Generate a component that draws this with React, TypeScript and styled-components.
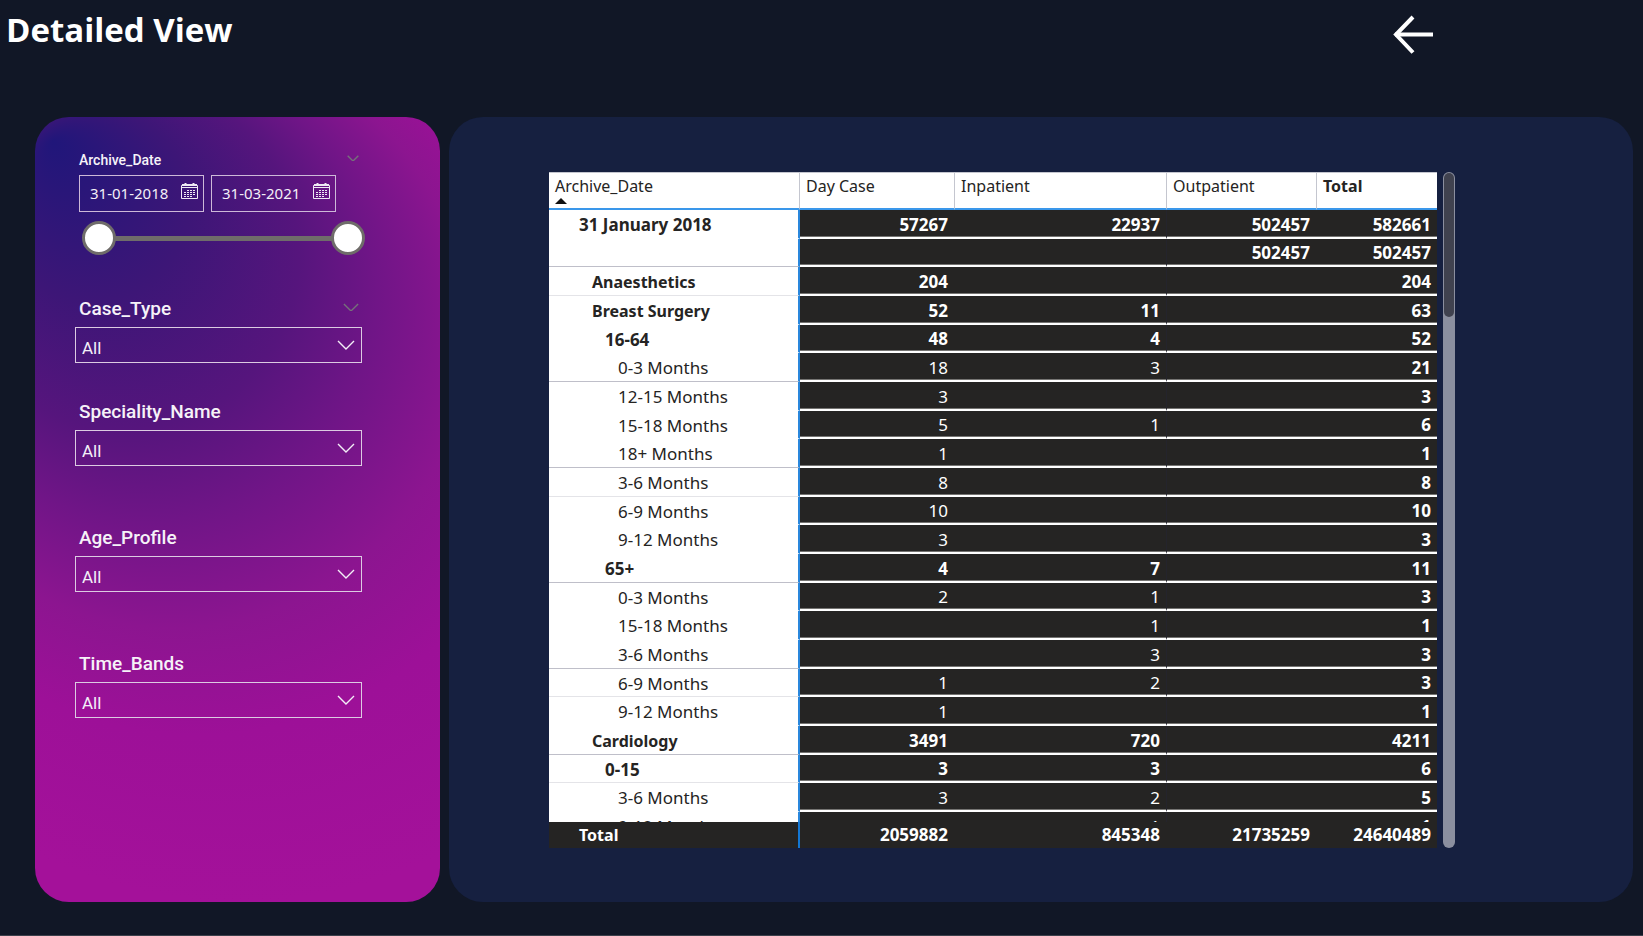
import React, { useState } from "react";
import styled, { createGlobalStyle } from "styled-components";

const GlobalStyle = createGlobalStyle`
  *, *::before, *::after { box-sizing: border-box; }
  body { margin: 0; background: #111726; }
`;

const textFont = `"Noto Sans", "Open Sans", sans-serif`;
const labelFont = `Roboto, "Liberation Sans", sans-serif`;

const Page = styled.div`
  display: flex;
  flex-direction: column;
  height: 100vh;
  min-height: 640px;
  padding: 0 10px 33px 35px;
  border-bottom: 1px solid #3c404b;
  background: #111726;
  font-family: ${textFont};
`;

const Header = styled.header`
  display: flex;
  flex: none;
  justify-content: space-between;
  height: 117px;
  margin-left: -29px;
  padding: 6px 197px 0 0;
`;

const Title = styled.h1`
  margin: 0;
  color: #fff;
  font: 700 33px/48px "Open Sans", "Noto Sans", sans-serif;
`;

const BackButton = styled.button`
  width: 44px;
  height: 44px;
  margin-top: 7px;
  padding: 0;
  border: 0;
  background: none;
  cursor: pointer;
  svg { display: block; }
`;

const Main = styled.main`
  display: flex;
  flex: 1;
  gap: 9px;
  min-height: 0;
`;

const FilterPanel = styled.aside`
  position: relative;
  z-index: 0;
  flex: none;
  width: 405px;
  padding: 34px 78px 0 40px;
  border-radius: 34px;
  overflow: hidden;
`;

const PanelGlow = styled.svg`
  position: absolute;
  inset: 0;
  z-index: -1;
  width: 100%;
  height: 100%;
`;

const Filter = styled.section<{ $space: number }>`
  display: flex;
  flex-direction: column;
  margin-bottom: ${(p) => p.$space}px;
`;

const FilterHead = styled.div`
  display: flex;
  align-items: center;
  justify-content: space-between;
  padding: 0 3px 0 4px;
  svg { margin-bottom: 4px; }
`;

const FilterLabel = styled.label<{ $small?: boolean }>`
  color: #f6f2f8;
  font: 500 ${(p) => (p.$small ? "14px/18px" : "19px/28px")} ${labelFont};
`;

const DateRow = styled.div`
  display: flex;
  gap: 7px;
  margin: 6px 26px 9px 4px;
`;

const DateBox = styled.div`
  display: flex;
  flex: 1;
  align-items: center;
  min-width: 0;
  height: 37px;
  padding: 0 5px 0 10px;
  border: 1px solid #cdb9d8;
  svg { flex: none; margin-bottom: 6px; }
`;

const DateInput = styled.input`
  flex: 1;
  min-width: 0;
  padding: 0 0 2px;
  border: 0;
  outline: 0;
  background: none;
  color: #f3eff7;
  font: 400 15px/20px ${textFont};
`;

const RangeTrack = styled.div`
  display: grid;
  align-items: center;
  height: 34px;
  margin: 0 -3px 0 7px;
  background: linear-gradient(#6f6c6a, #6f6c6a) center / calc(100% - 30px) 5px no-repeat;
`;

const RangeInput = styled.input`
  grid-area: 1 / 1;
  width: 100%;
  height: 34px;
  margin: 0;
  appearance: none;
  background: none;
  pointer-events: none;
  &::-webkit-slider-thumb {
    appearance: none;
    width: 34px;
    height: 34px;
    border: 3px solid #6f6c6a;
    border-radius: 50%;
    background: #fff;
    pointer-events: auto;
  }
`;

const SelectBox = styled.div`
  display: grid;
  align-items: center;
  height: 36px;
  margin-top: 4px;
  border: 1px solid #dccbe2;
  svg { grid-area: 1 / 1; justify-self: end; margin-right: 6px; pointer-events: none; }
`;

const Select = styled.select`
  grid-area: 1 / 1;
  width: 100%;
  height: 34px;
  padding: 5px 6px 0;
  border: 0;
  appearance: none;
  background: none;
  color: #f3eff7;
  font: 400 17px/24px ${labelFont};
  option { color: #252423; }
`;

const DataPanel = styled.section`
  display: flex;
  flex: 1;
  gap: 6px;
  min-width: 0;
  padding: 55px 0 54px 100px;
  border-radius: 34px;
  background: #162040;
`;

const TableView = styled.div`
  width: calc(75% + 75px);
  overflow: hidden;
  background: #252423;
`;

const Table = styled.table`
  width: 100%;
  border-spacing: 0;
  table-layout: fixed;
  color: #252423;
  font: 400 17px/22px ${textFont};
`;

const Col = styled.col<{ $width?: number }>`
  width: ${(p) => (p.$width ? `${p.$width}px` : "auto")};
`;

const HeadCell = styled.th<{ $strong?: boolean }>`
  position: sticky;
  top: 0;
  height: 38px;
  padding: 2px 6px 0;
  border-top: 1px solid #c4c6cf;
  border-right: 1px solid #c4c6cf;
  border-bottom: 2px solid #3a97ea;
  background: #fff;
  font-size: 16px;
  font-weight: ${(p) => (p.$strong ? 700 : 400)};
  text-align: left;
  vertical-align: top;
  &:last-child { border-right: 0; }
  svg { display: block; margin-top: 1px; }
`;

const Row = styled.tr`
  height: 29px;
  &:nth-child(3n + 2) { height: 28px; }
`;

const ruleColors = { none: "#fff", soft: "#e4e4e8", strong: "#bfbfc9" };

const RowHead = styled.th<{ $level: number; $strong: boolean; $rule: keyof typeof ruleColors }>`
  padding: 2px 0 0 ${(p) => 30 + p.$level * 13}px;
  border-right: 2px solid #2a87dc;
  border-bottom: 1px solid ${(p) => ruleColors[p.$rule]};
  background: #fff;
  font-size: ${(p) => (p.$level === 1 ? 16 : 17)}px;
  font-weight: ${(p) => (p.$strong ? 700 : 400)};
  text-align: left;
  white-space: nowrap;
`;

const Cell = styled.td<{ $strong: boolean }>`
  padding: 2px 7px 0 0;
  border-bottom: 2px solid #fff;
  background: #252423;
  box-shadow: inset 0 -1px #757472;
  color: #fff;
  font-weight: ${(p) => (p.$strong ? 700 : 400)};
  text-align: right;
  &:nth-child(3) { padding-right: 6px; border-right: 1px solid #24242c; }
  &:last-child { padding-right: 6px; }
`;

const FootHead = styled.th`
  position: sticky;
  bottom: 0;
  height: 26px;
  padding: 0 0 1px 30px;
  border-right: 2px solid #1377d4;
  background: #252423;
  color: #fff;
  font-size: 16px;
  text-align: left;
`;

const FootCell = styled.td`
  position: sticky;
  bottom: 0;
  height: 26px;
  padding: 0 7px 1px 0;
  background: #252423;
  color: #fff;
  font-weight: 700;
  text-align: right;
  &:last-child { padding-right: 6px; }
`;

const ScrollTrack = styled.div`
  width: 12px;
  padding: 1px;
  border-radius: 6px;
  background: #8b8f9f;
`;

const ScrollThumb = styled.div`
  height: 144px;
  border-radius: 5px;
  background: #40424f;
`;

const Chevron = ({ width, color }: { width: number; color: string }) => (
  <svg width={width} height={(width / 18) * 10} viewBox="0 0 18 10" fill="none" stroke={color} strokeWidth={(18 / width) * 1.4}>
    <path d="M1 1l8 8 8-8" />
  </svg>
);

const CalendarIcon = () => (
  <svg width="17" height="16" viewBox="0 0 17 16" fill="none" stroke="#efeaf4">
    <path d="M.5 2.5h16v13H.5z M.5 4.500h16 M1 1.500h15" />
    <path d="M4.500 0v3 M12.500 0v3" strokeWidth="2" />
    <path d="M6 7.500h9 M3 9.500h12 M3 11.500h12 M3 13.500h9" strokeDasharray="2 1" />
  </svg>
);

type Rule = keyof typeof ruleColors;
type RowData = { name: string; level: number; values: [string, string, string, string]; rule?: Rule };

const rows: RowData[] = [
  { name: "31 January 2018", level: 0, values: ["57267", "22937", "502457", "582661"] },
  { name: "", level: 1, values: ["", "", "502457", "502457"], rule: "strong" },
  { name: "Anaesthetics", level: 1, values: ["204", "", "", "204"], rule: "soft" },
  { name: "Breast Surgery", level: 1, values: ["52", "11", "", "63"] },
  { name: "16-64", level: 2, values: ["48", "4", "", "52"] },
  { name: "0-3 Months", level: 3, values: ["18", "3", "", "21"], rule: "strong" },
  { name: "12-15 Months", level: 3, values: ["3", "", "", "3"] },
  { name: "15-18 Months", level: 3, values: ["5", "1", "", "6"] },
  { name: "18+ Months", level: 3, values: ["1", "", "", "1"], rule: "strong" },
  { name: "3-6 Months", level: 3, values: ["8", "", "", "8"], rule: "soft" },
  { name: "6-9 Months", level: 3, values: ["10", "", "", "10"] },
  { name: "9-12 Months", level: 3, values: ["3", "", "", "3"] },
  { name: "65+", level: 2, values: ["4", "7", "", "11"], rule: "strong" },
  { name: "0-3 Months", level: 3, values: ["2", "1", "", "3"] },
  { name: "15-18 Months", level: 3, values: ["", "1", "", "1"] },
  { name: "3-6 Months", level: 3, values: ["", "3", "", "3"], rule: "strong" },
  { name: "6-9 Months", level: 3, values: ["1", "2", "", "3"], rule: "soft" },
  { name: "9-12 Months", level: 3, values: ["1", "", "", "1"] },
  { name: "Cardiology", level: 1, values: ["3491", "720", "", "4211"], rule: "strong" },
  { name: "0-15", level: 2, values: ["3", "3", "", "6"], rule: "soft" },
  { name: "3-6 Months", level: 3, values: ["3", "2", "", "5"] },
  { name: "9-12 Months", level: 3, values: ["", "1", "", "1"] },
];

const selects = [
  { label: "Case_Type", space: 35, collapsible: true },
  { label: "Speciality_Name", space: 58, collapsible: false },
  { label: "Age_Profile", space: 58, collapsible: false },
  { label: "Time_Bands", space: 0, collapsible: false },
];

export default function App() {
  const [from, setFrom] = useState("31-01-2018");
  const [to, setTo] = useState("31-03-2021");

  return (
    <Page>
      <GlobalStyle />
      <Header>
        <Title>Detailed View</Title>
        <BackButton aria-label="Back">
          <svg width="44" height="44" viewBox="0 0 44 44" fill="none" stroke="#fff" strokeWidth="4">
            <path d="M3 21.500h38" />
            <path d="M21 4L4 21.500l17 18" />
          </svg>
        </BackButton>
      </Header>
      <Main>
        <FilterPanel>
          <PanelGlow viewBox="0 0 405 785" preserveAspectRatio="none" aria-hidden="true">
            <defs>
              <radialGradient id="glow" gradientUnits="userSpaceOnUse" cx="205" cy="325" r="460" fx="18" fy="24">
                <stop offset="0" stopColor="#20167a" />
                <stop offset="0.21" stopColor="#3d1677" />
                <stop offset="0.38" stopColor="#56157d" />
                <stop offset="0.5" stopColor="#701587" />
                <stop offset="0.64" stopColor="#8c1590" />
                <stop offset="0.78" stopColor="#9d1098" />
                <stop offset="1" stopColor="#a4119a" />
              </radialGradient>
            </defs>
            <rect width="405" height="785" fill="url(#glow)" />
          </PanelGlow>
          <Filter $space={40}>
            <FilterHead>
              <FilterLabel $small htmlFor="date-from">Archive_Date</FilterLabel>
              <Chevron width={12} color="#75707a" />
            </FilterHead>
            <DateRow>
              <DateBox>
                <DateInput id="date-from" value={from} onChange={(e) => setFrom(e.target.value)} />
                <CalendarIcon />
              </DateBox>
              <DateBox>
                <DateInput aria-label="Archive_Date end" value={to} onChange={(e) => setTo(e.target.value)} />
                <CalendarIcon />
              </DateBox>
            </DateRow>
            <RangeTrack>
              <RangeInput type="range" aria-label="Range start" defaultValue={0} />
              <RangeInput type="range" aria-label="Range end" defaultValue={100} />
            </RangeTrack>
          </Filter>
          {selects.map((s) => (
            <Filter key={s.label} $space={s.space}>
              <FilterHead>
                <FilterLabel htmlFor={s.label}>{s.label}</FilterLabel>
                {s.collapsible && <Chevron width={16} color="#75707a" />}
              </FilterHead>
              <SelectBox>
                <Select id={s.label}>
                  <option>All</option>
                </Select>
                <Chevron width={18} color="#f3eff7" />
              </SelectBox>
            </Filter>
          ))}
        </FilterPanel>
        <DataPanel>
          <TableView>
            <Table>
              <colgroup>
                <Col />
                <Col $width={155} />
                <Col $width={212} />
                <Col $width={150} />
                <Col $width={120} />
              </colgroup>
              <thead>
                <tr>
                  <HeadCell scope="col">
                    Archive_Date
                    <svg width="12" height="6" viewBox="0 0 12 6" fill="#111">
                      <path d="M0 6l6-6 6 6z" />
                    </svg>
                  </HeadCell>
                  <HeadCell scope="col">Day Case</HeadCell>
                  <HeadCell scope="col">Inpatient</HeadCell>
                  <HeadCell scope="col">Outpatient</HeadCell>
                  <HeadCell scope="col" $strong>Total</HeadCell>
                </tr>
              </thead>
              <tbody>
                {rows.map((r, i) => (
                  <Row key={i}>
                    <RowHead scope="row" $level={r.level} $strong={r.level < 3} $rule={r.rule ?? "none"}>
                      {r.name}
                    </RowHead>
                    {r.values.map((v, c) => (
                      <Cell key={c} $strong={r.level < 3 || c === 3}>{v}</Cell>
                    ))}
                  </Row>
                ))}
              </tbody>
              <tfoot>
                <tr>
                  <FootHead scope="row">Total</FootHead>
                  <FootCell>2059882</FootCell>
                  <FootCell>845348</FootCell>
                  <FootCell>21735259</FootCell>
                  <FootCell>24640489</FootCell>
                </tr>
              </tfoot>
            </Table>
          </TableView>
          <ScrollTrack>
            <ScrollThumb />
          </ScrollTrack>
        </DataPanel>
      </Main>
    </Page>
  );
}
